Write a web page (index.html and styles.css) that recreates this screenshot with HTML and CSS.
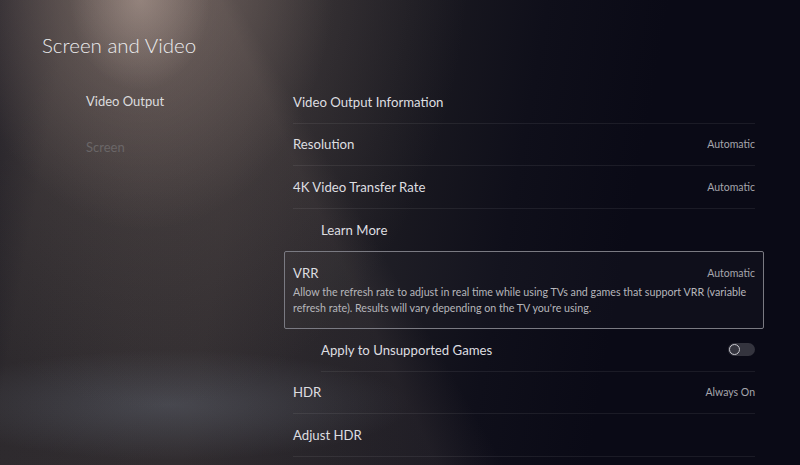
FILE: index.html
```html
<!DOCTYPE html>
<html lang="en">
<head>
  <meta charset="UTF-8" />
  <meta name="viewport" content="width=device-width, initial-scale=1.0"/>
  <title>Screen and Video</title>
  <link rel="stylesheet" href="styles.css">
</head>
<body>
  <div class="screen">
    <h1 class="title">Screen and Video</h1>

    <div class="layout">
      <ul class="nav">
        <li class="nav-item active">Video Output</li>
        <li class="nav-item">Screen</li>
      </ul>

      <div class="list">
        <div class="row">
          <span class="label">Video Output Information</span>
        </div>
        <div class="row">
          <span class="label">Resolution</span>
          <span class="value">Automatic</span>
        </div>
        <div class="row">
          <span class="label">4K Video Transfer Rate</span>
          <span class="value">Automatic</span>
        </div>
        <div class="row sub no-line">
          <span class="label">Learn More</span>
        </div>

        <div class="focus">
          <div class="focus-head">
            <span class="label">VRR</span>
            <span class="value">Automatic</span>
          </div>
          <p class="desc">Allow the refresh rate to adjust in real time while using TVs and games that support VRR (variable refresh rate). Results will vary depending on the TV you're using.</p>
        </div>

        <div class="row sub">
          <span class="label">Apply to Unsupported Games</span>
          <span class="toggle"><span class="knob"></span></span>
        </div>
        <div class="row">
          <span class="label">HDR</span>
          <span class="value">Always On</span>
        </div>
        <div class="row">
          <span class="label">Adjust HDR</span>
        </div>
      </div>
    </div>
  </div>
</body>
</html>
```

FILE: styles.css
```css
body {
  margin: 0;
  width: 800px;
  height: 465px;
  overflow: hidden;
  font-family: Lato, "Open Sans", sans-serif;
  color: #e2e2e4;
  background-color: #0a0a16;
  background-image:
    radial-gradient(ellipse 70px 90px at 140px 0px, rgba(190,170,160,0.45), rgba(190,170,160,0) 100%),
    radial-gradient(ellipse 190px 260px at 145px -30px, rgba(150,130,122,0.55), rgba(150,130,122,0) 100%),
    radial-gradient(ellipse 320px 470px at 150px -60px, rgba(120,106,100,0.45), rgba(120,106,100,0) 100%),
    conic-gradient(from 150deg at 150px -150px, rgba(150,130,122,0) 0deg, rgba(150,130,122,0.1) 5deg, rgba(150,130,122,0.07) 32deg, rgba(150,130,122,0) 56deg),
    radial-gradient(ellipse 240px 55px at 170px 405px, rgba(88,95,108,0.5), rgba(88,95,108,0) 100%),
    linear-gradient(100deg, #17161f 0px, #2a272b 70px, #29262a 260px, #1b1a21 410px, #0f0f1a 540px, #0a0a16 660px);
}
.screen {
  height: 100%;
}
.title {
  margin: 0;
  padding: 31px 0 0 42px;
  font-size: 20.5px;
  font-weight: 300;
  line-height: 28px;
  color: #ececee;
}
.layout {
  display: flex;
  padding-top: 22px;
}
.nav {
  list-style: none;
  margin: 0;
  padding: 0 0 0 86px;
  width: 284px;
  box-sizing: border-box;
}
.nav-item {
  height: 46px;
  line-height: 40px;
  font-size: 13px;
  color: #dcdcde;
}
.nav-item + .nav-item {
  color: #6a6667;
}
.list {
  width: 480px;
}
.row {
  display: flex;
  align-items: center;
  justify-content: space-between;
  height: 42.5px;
  box-sizing: border-box;
  margin: 0 9px;
  border-bottom: 1px solid rgba(255,255,255,0.07);
}
.row.sub {
  margin-left: 37px;
}
.row.no-line {
  border-bottom: none;
}
.label {
  font-size: 13.2px;
  color: #dedee0;
}
.value {
  font-size: 10.5px;
  color: #a6a6ad;
}
.focus {
  border: 1px solid #7a7a82;
  border-radius: 2px;
  background: rgba(255,255,255,0.025);
  padding: 12px 8px 9px 8px;
  height: 78px;
  box-sizing: border-box;
}
.focus-head {
  display: flex;
  justify-content: space-between;
  align-items: center;
  height: 17px;
}
.desc {
  margin: 3px 0 0;
  font-size: 10.7px;
  line-height: 16px;
  color: #b6b6bb;
}
.toggle {
  width: 27px;
  height: 13px;
  border-radius: 7px;
  background: #34343e;
  display: flex;
  align-items: center;
  padding-left: 1px;
  box-sizing: border-box;
}
.knob {
  width: 9px;
  height: 9px;
  border-radius: 50%;
  border: 1.5px solid #c8c8ce;
}
```
